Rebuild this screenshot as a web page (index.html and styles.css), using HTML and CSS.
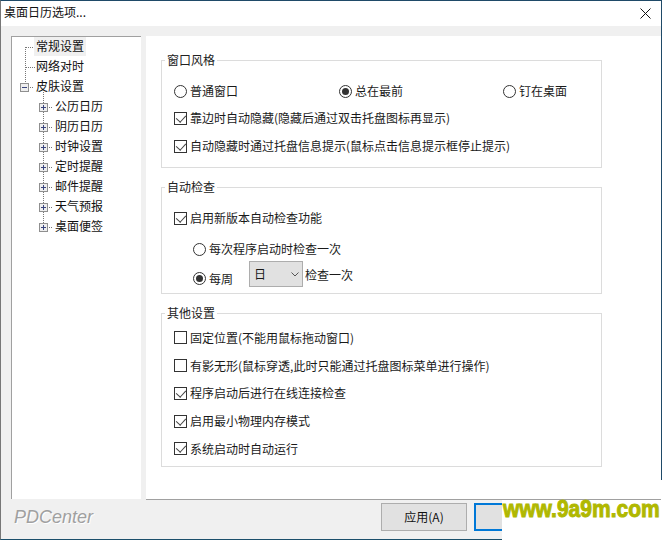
FILE: index.html
```html
<!DOCTYPE html>
<html lang="zh">
<head>
<meta charset="utf-8">
<title>桌面日历选项...</title>
<link rel="stylesheet" href="styles.css">
</head>
<body>
<div class="window">
  <header class="titlebar">
    <span class="title">桌面日历选项...</span>
    <svg class="close" width="11" height="11" viewBox="0 0 11 11"><path d="M.5.5l10 10M10.500.5l-10 10" stroke="#111" fill="none"/></svg>
  </header>
  <main class="body">
    <nav class="tree">
      <svg class="tree-lines" width="60" height="200" viewBox="0 0 60 200">
        <path d="M24.500 11v36M25 11.500h10M25 31.500h10M29 51.500h4M42.500 56v136M48 71.500h4M48 91.500h4M48 111.500h4M48 131.500h4M48 151.500h4M48 171.500h4M48 191.500h4" stroke="#777" stroke-dasharray="1 1" fill="none"/>
      </svg>
      <ul class="tree-list">
        <li class="node selected"><span class="label">常规设置</span></li>
        <li class="node"><span class="label">网络对时</span></li>
        <li class="node"><i class="box minus"></i><span class="label">皮肤设置</span></li>
        <li class="node sub"><i class="box plus"></i><span class="label">公历日历</span></li>
        <li class="node sub"><i class="box plus"></i><span class="label">阴历日历</span></li>
        <li class="node sub"><i class="box plus"></i><span class="label">时钟设置</span></li>
        <li class="node sub"><i class="box plus"></i><span class="label">定时提醒</span></li>
        <li class="node sub"><i class="box plus"></i><span class="label">邮件提醒</span></li>
        <li class="node sub"><i class="box plus"></i><span class="label">天气预报</span></li>
        <li class="node sub"><i class="box plus"></i><span class="label">桌面便签</span></li>
      </ul>
    </nav>
    <section class="panel">
      <fieldset class="group g1">
        <legend>窗口风格</legend>
        <div class="radio-row">
          <label class="opt"><i class="radio"></i>普通窗口</label>
          <label class="opt"><i class="radio on"></i>总在最前</label>
          <label class="opt"><i class="radio"></i>钉在桌面</label>
        </div>
        <label class="opt row"><i class="check on"></i>靠边时自动隐藏(隐藏后通过双击托盘图标再显示)</label>
        <label class="opt row"><i class="check on"></i>自动隐藏时通过托盘信息提示(鼠标点击信息提示框停止提示)</label>
      </fieldset>
      <fieldset class="group g2">
        <legend>自动检查</legend>
        <label class="opt row"><i class="check on"></i>启用新版本自动检查功能</label>
        <label class="opt row indent once"><i class="radio"></i>每次程序启动时检查一次</label>
        <div class="opt indent week">
          <label class="opt week-radio"><i class="radio on"></i>每周</label>
          <span class="select">日<svg width="8" height="5" viewBox="0 0 8 5"><path d="M.5.500l3.500 3.500 3.500-3.500" stroke="#555" fill="none"/></svg></span>
          <span class="week-after">检查一次</span>
        </div>
      </fieldset>
      <fieldset class="group g3">
        <legend>其他设置</legend>
        <label class="opt row"><i class="check"></i>固定位置(不能用鼠标拖动窗口)</label>
        <label class="opt row"><i class="check"></i>有影无形(鼠标穿透,此时只能通过托盘图标菜单进行操作)</label>
        <label class="opt row"><i class="check on"></i>程序启动后进行在线连接检查</label>
        <label class="opt row"><i class="check on"></i>启用最小物理内存模式</label>
        <label class="opt row"><i class="check on"></i>系统启动时自动运行</label>
      </fieldset>
    </section>
  </main>
  <footer class="footer">
    <span class="brand">PDCenter</span>
    <div class="buttons">
      <button class="btn">应用(A)</button>
      <button class="btn default"></button>
    </div>
  </footer>
  <div class="watermark"><span class="watermark-text">www.9a9m.com</span></div>
</div>
</body>
</html>
```
FILE: styles.css
```css
* { box-sizing: border-box; }
html, body { margin: 0; padding: 0; }
body {
  width: 662px;
  height: 540px;
  overflow: hidden;
  font: 12px/16px "Noto Sans CJK SC", "Liberation Sans", sans-serif;
  color: #1a1a1a;
  background: #fff;
}
.window {
  position: relative;
  width: 662px;
  height: 540px;
  display: flex;
  flex-direction: column;
  border: 1px solid #1f4a68;
  border-left-color: #777;
  border-bottom-color: #1b4f6b;
}
.titlebar {
  height: 25px;
  flex: none;
  display: flex;
  align-items: center;
  justify-content: space-between;
  padding: 0 10px 4px 3px;
  background: #fff;
}
.title { font-size: 12px; color: #111; }
.close { margin-top: 4px; }
.body {
  flex: none;
  height: 474px;
  background: #f0f0f0;
  padding: 10px 0 0 10px;
  display: flex;
  gap: 5px;
}
.tree {
  position: relative;
  width: 130px;
  height: 463px;
  background: #fff;
  border-left: 1px solid #a0a0a0;
  border-top: 1px solid #a0a0a0;
}
.tree-lines { position: absolute; left: -11px; top: -1px; }
.tree-list { position: relative; list-style: none; margin: 0; padding: 0; }
.node {
  height: 20px;
  display: flex;
  align-items: flex-start;
  padding-left: 22px;
  position: relative;
}
.node.sub { padding-left: 42px; }
.label { padding: 1px 2px 2px; line-height: 16px; color: #111; }
.sub .label { padding: 1px 1px 2px; }
.selected .label { background: #f0f0f0; }
.box {
  position: absolute;
  width: 9px;
  height: 9px;
  border: 1px solid #8f8f8f;
  background: #eee;
  top: 6px;
  left: 8px;
}
.sub .box { left: 27px; }
.box::before {
  content: "";
  position: absolute;
  left: 1px;
  top: 3px;
  width: 5px;
  height: 1px;
  background: #39447c;
}
.plus::after {
  content: "";
  position: absolute;
  left: 3px;
  top: 1px;
  width: 1px;
  height: 5px;
  background: #39447c;
}
.panel {
  width: 515px;
  height: 464px;
  background: #fff;
  border-bottom: 1px solid #a0a0a0;
  padding: 16px 0 0 15px;
}
.group {
  width: 441px;
  margin: 0;
  padding: 0 0 0 12px;
  border: 1px solid #dcdcdc;
  display: flex;
  flex-direction: column;
  min-width: 0;
}
.group legend {
  margin-left: -9px;
  padding: 0 2px;
  line-height: 16px;
  color: #222;
}
.g1 { height: 116px; padding-top: 10px; }
.g2 { height: 115px; margin-top: 11px; padding-top: 9px; }
.g3 { height: 162px; margin-top: 11px; padding-top: 3px; }
.g3 .row { height: 27.75px; }
.opt { display: flex; align-items: center; gap: 3px; white-space: nowrap; }
.row { height: 28px; flex: none; }
.radio-row { display: flex; height: 26px; flex: none; align-items: center; }
.radio-row .opt:nth-child(1) { width: 165px; }
.radio-row .opt:nth-child(2) { width: 164px; }
.radio, .check { flex: none; display: block; position: relative; width: 13px; height: 13px; background: #fff; border: 1px solid #333; }
.radio { border-radius: 50%; }
.radio.on::after {
  content: "";
  position: absolute;
  left: 2px;
  top: 2px;
  width: 7px;
  height: 7px;
  border-radius: 50%;
  background: #333;
}
.check.on::after {
  content: "";
  position: absolute;
  left: 3px;
  top: 0;
  width: 5px;
  height: 8px;
  border: solid #444;
  border-width: 0 1px 1px 0;
  transform: rotate(42deg);
}
.indent { margin-left: 19px; }
.once { margin-top: 3px; }
.week { gap: 16px; height: 26px; flex: none; margin-top: -2px; }
.week-radio { padding-top: 9px; }
.week .select { margin-right: -14px; }
.week-after { padding-top: 1px; }
.select {
  width: 54px;
  height: 26px;
  display: flex;
  align-items: center;
  justify-content: space-between;
  padding: 0 3px 0 4px;
  background: #e1e1e1;
  border: 1px solid #adadad;
}
.footer {
  flex: 1;
  background: #f0f0f0;
  display: flex;
  align-items: center;
  justify-content: space-between;
  padding: 0 0 5px 13px;
}
.brand {
  font: italic 18px/20px "Liberation Sans", sans-serif;
  color: #a0a0a0;
  text-shadow: 1px 1px 0 #fff;
}
.buttons { display: flex; gap: 7px; margin-right: 101px; }
.btn {
  width: 86px;
  height: 28px;
  font: inherit;
  color: #111;
  background: #e1e1e1;
  border: 1px solid #adadad;
  padding: 0;
}
.btn.default { border: 2px solid #0078d7; }
.watermark {
  position: absolute;
  right: -1px;
  bottom: -1px;
  width: 160px;
  height: 40px;
  background: #fff;
}
.watermark::before {
  content: "";
  position: absolute;
  right: 0;
  top: -20px;
  width: 1px;
  height: 20px;
  background: #fff;
}
.watermark-text {
  display: block;
  width: 194px;
  padding-left: 1px;
  font: 700 24px/18px "Liberation Sans", sans-serif;
  color: #b0b800;
  -webkit-text-stroke: 1px #b0b800;
  white-space: nowrap;
  transform: scaleX(0.875);
  transform-origin: left top;
}
```
